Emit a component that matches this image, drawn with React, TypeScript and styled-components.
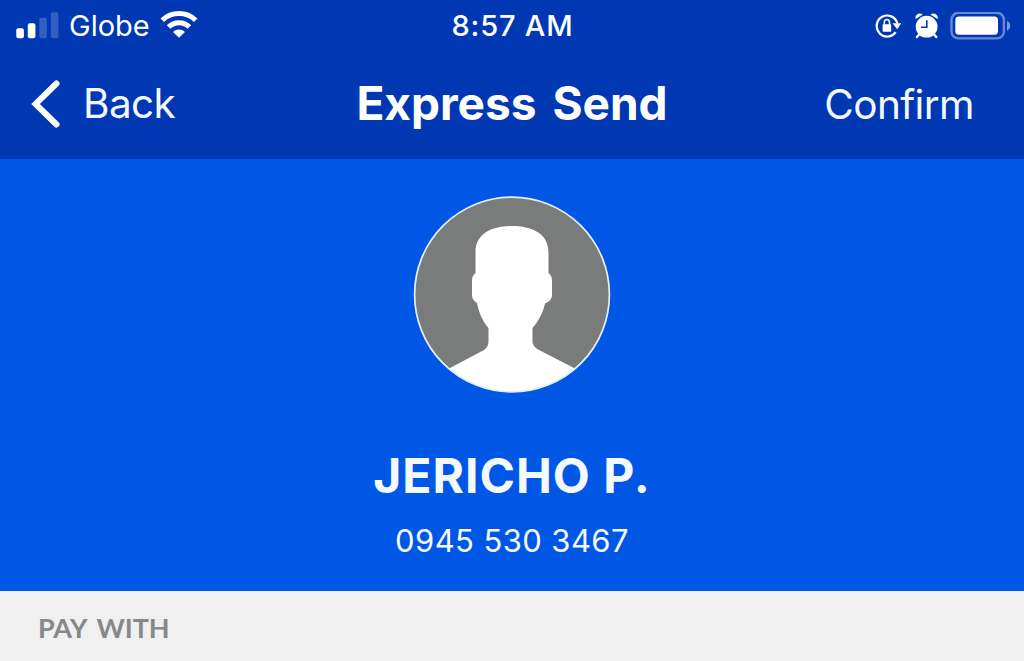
import styled, { createGlobalStyle } from "styled-components";

const GlobalStyles = createGlobalStyle`
  html {
    box-sizing: border-box;
    background: #f0f0f1;
    font-family: Inter, "Liberation Sans", sans-serif;
  }

  body {
    margin: 0;
  }

  *,
  *:before,
  *:after {
    box-sizing: inherit;
  }
`;

function SignalIcon() {
  return (
    <svg width="43" height="28" viewBox="0 -1 43 28" fill="#fff">
      <rect x="0.3" y="15.2" width="7.6" height="10" rx="2" />
      <rect x="11.8" y="10.2" width="7.6" height="15" rx="2" />
      <rect x="23.3" y="4.8" width="7.6" height="20.4" rx="2" opacity="0.2" />
      <rect x="34.8" y="-0.8" width="7.6" height="26" rx="2" opacity="0.2" />
    </svg>
  );
}

function WifiIcon() {
  return (
    <svg width="38" height="30" viewBox="0 1 38 30" fill="none" stroke="#fff">
      <path d="M2.3 10.3A24.2 24.2 0 0 1 35.7 10.3" strokeWidth="5" />
      <path d="M8.6 17A14.8 14.8 0 0 1 29.4 17" strokeWidth="5" />
      <path d="M13 21.9A8.8 8.8 0 0 1 25 21.9L19 27.8Z" fill="#fff" stroke="none" />
    </svg>
  );
}

function RotationLockIcon() {
  return (
    <svg width="27" height="26" viewBox="0 0 27 26" fill="none" stroke="#fff">
      <path d="M20.7 19.2A10.5 10.5 0 1 1 22.3 10.2" strokeWidth="2.2" />
      <path d="M17.6 10.2H26.2L22.2 16.2Z" fill="#fff" stroke="none" />
      <rect x="7.6" y="11.3" width="8.6" height="7.4" rx="0.8" fill="#fff" stroke="none" />
      <path d="M9.3 11.8V9.4A2.6 2.9 0 0 1 14.5 9.4V11.8" strokeWidth="1.5" />
    </svg>
  );
}

function AlarmIcon() {
  return (
    <svg width="24" height="26" viewBox="-0.6 0 24 26" fill="#fff">
      <circle cx="12" cy="13.7" r="10.9" />
      <path d="M1 6C-0.3 1.7 4.7-1 8.2 1.5Z" />
      <path d="M23 6C24.3 1.7 19.3-1 15.8 1.5Z" />
      <path d="M4.5 21.5L2.3 24M19.5 21.5L21.7 24" stroke="#fff" strokeWidth="2.4" strokeLinecap="round" />
      <path d="M12.2 7.2V14.2H6.4" fill="none" stroke="#0037b3" strokeWidth="1.6" />
    </svg>
  );
}

function BatteryIcon() {
  return (
    <svg width="61" height="28" viewBox="0 0 61 28" fill="none">
      <rect x="1.5" y="0.8" width="52.4" height="25.6" rx="7" stroke="#6689d3" strokeWidth="2.4" />
      <rect x="5.3" y="4.4" width="42.7" height="18.4" rx="3.6" fill="#fff" />
      <path d="M57 8.9C61.3 10.4 61.3 17.2 57 18.7Z" fill="#7896d9" />
    </svg>
  );
}

function Avatar() {
  return (
    <svg width="198" height="198" viewBox="0 0 198 198">
      <clipPath id="avatar">
        <circle cx="99" cy="98.5" r="97.5" />
      </clipPath>
      <circle cx="99" cy="98.5" r="97.4" fill="#7a7c7b" />
      <path
        clipPath="url(#avatar)"
        fill="#fff"
        d="M62.5 77V56C62.5 37 80 30 99 30S135.5 37 135.5 56V77C138 79 139 81 139 85V99C139 103 136 106 132 107.5C130 117 125 126 119.5 132V145C119.5 149 122 152 126 154L162 172.5V198H36V172.5L71 154C74 152 75.5 149 75.5 145V132C70 126 66 117 64 107C61 105 59 103 59 99V85C59 81 60 79 62.5 77Z"
      />
      <circle cx="99" cy="98.5" r="97.4" fill="none" stroke="#e5f0fb" strokeWidth="1.7" />
    </svg>
  );
}

function App() {
  return (
    <Screen>
      <GlobalStyles />
      <Header>
        <StatusBar>
          <StatusGroup $gap={10}>
            <SignalIcon />
            <Carrier>Globe</Carrier>
            <WifiIcon />
          </StatusGroup>
          <Time>8:57 AM</Time>
          <StatusGroup $gap={12} $end>
            <RotationLockIcon />
            <AlarmIcon />
            <BatteryIcon />
          </StatusGroup>
        </StatusBar>
        <NavBar>
          <NavButton $gap={22}>
            <svg width="31" height="50" viewBox="-1 0 31 50" fill="none" stroke="#fff">
              <path d="M25.5 4.5L4.5 25L25.5 45.5" strokeWidth="6" strokeLinecap="round" />
            </svg>
            Back
          </NavButton>
          <Title>Express Send</Title>
          <NavButton $end>Confirm</NavButton>
        </NavBar>
      </Header>
      <Recipient>
        <Avatar />
        <Name>JERICHO P.</Name>
        <Phone>0945 530 3467</Phone>
      </Recipient>
      <SectionLabel>PAY WITH</SectionLabel>
    </Screen>
  );
}

export default App;

const Screen = styled.div`
  width: 1024px;
  height: 661px;
  overflow: hidden;
  display: flex;
  flex-direction: column;
  white-space: nowrap;
`;

const Header = styled.header`
  height: 159px;
  flex: none;
  background: #0037b3;
  color: #fff;
`;

const StatusBar = styled.div`
  display: grid;
  grid-template-columns: 1fr auto 1fr;
  align-items: center;
  height: 51px;
  padding: 0 13px 0 16px;
`;

const StatusGroup = styled.div<{ $gap: number; $end?: boolean }>`
  display: flex;
  align-items: center;
  gap: ${(p) => p.$gap}px;
  justify-content: ${(p) => (p.$end ? "flex-end" : "flex-start")};
`;

const Carrier = styled.span`
  font-size: 29px;
  line-height: 34px;
`;

const Time = styled.span`
  margin-right: 2px;
  font-size: 29px;
  line-height: 34px;
  font-weight: 500;
  letter-spacing: 0.8px;
`;

const NavBar = styled.nav`
  display: grid;
  grid-template-columns: 1fr auto 1fr;
  align-items: center;
  height: 106px;
  padding: 0 30px;
`;

const NavButton = styled.button<{ $gap?: number; $end?: boolean }>`
  display: flex;
  align-items: center;
  gap: ${(p) => p.$gap ?? 0}px;
  justify-self: ${(p) => (p.$end ? "end" : "start")};
  padding: ${(p) => (p.$end ? "2px 20px 0 0" : "0")};
  border: 0;
  background: none;
  color: #f4f9ff;
  font: 400 40.5px/48px Inter, sans-serif;
  letter-spacing: -0.6px;
`;

const Title = styled.h1`
  margin: 0 0 3px;
  font-size: 46px;
  line-height: 56px;
  font-weight: 700;
  word-spacing: 5px;
`;

const Recipient = styled.section`
  display: flex;
  flex-direction: column;
  align-items: center;
  height: 432px;
  flex: none;
  padding-top: 37px;
  background: #0057e6;
  color: #f4f9ff;
`;

const Name = styled.h2`
  margin: 53px 0 0;
  font-size: 48px;
  line-height: 58px;
  font-weight: 700;
  letter-spacing: 1px;
`;

const Phone = styled.p`
  margin: 18px 0 0;
  font-size: 31px;
  line-height: 36px;
  letter-spacing: 0.4px;
`;

const SectionLabel = styled.h3`
  margin: 0;
  padding: 20px 38px;
  color: #86888a;
  font-family: Lato, sans-serif;
  font-size: 27px;
  line-height: 34px;
  font-weight: 700;
  letter-spacing: -0.1px;
  word-spacing: 4px;
`;
